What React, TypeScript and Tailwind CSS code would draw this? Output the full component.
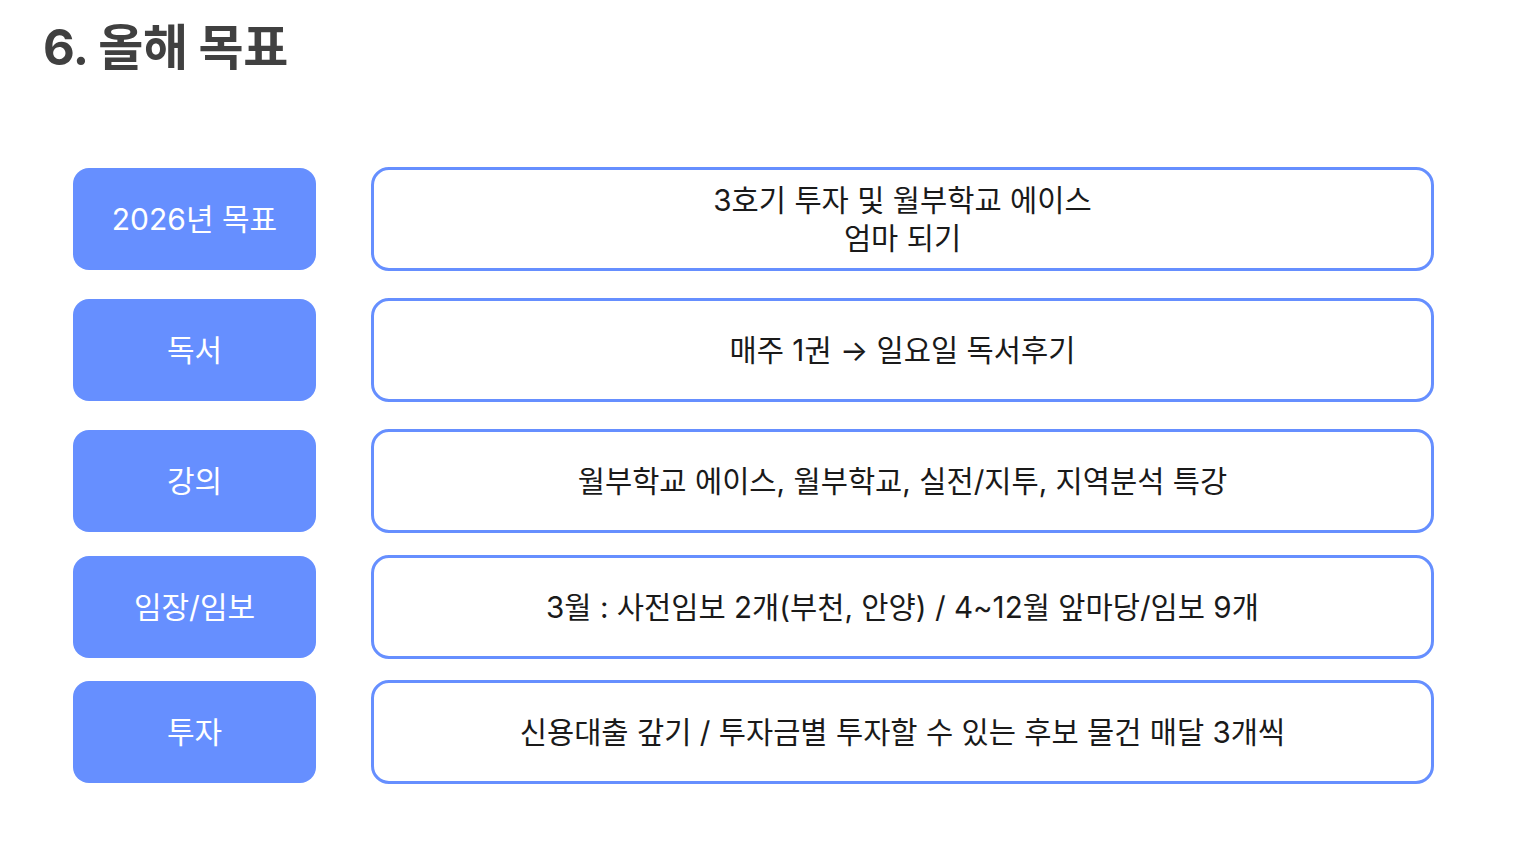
import React from "react";

const rows: { label: string; lines: string[]; mt: string }[] = [
  { label: "2026년 목표", lines: ["3호기 투자 및 월부학교 에이스", "엄마 되기"], mt: "mt-0" },
  { label: "독서", lines: ["매주 1권 → 일요일 독서후기"], mt: "mt-[29px]" },
  { label: "강의", lines: ["월부학교 에이스, 월부학교, 실전/지투, 지역분석 특강"], mt: "mt-[29px]" },
  { label: "임장/임보", lines: ["3월 : 사전임보 2개(부천, 안양) / 4~12월 앞마당/임보 9개"], mt: "mt-[24px]" },
  { label: "투자", lines: ["신용대출 갚기 / 투자금별 투자할 수 있는 후보 물건 매달 3개씩"], mt: "mt-[23px]" },
];

export default function App() {
  return (
    <div
      className="w-[1520px] h-[855px] bg-white overflow-hidden relative"
      style={{ fontFamily: 'Inter, "Noto Sans CJK KR", sans-serif' }}
    >
      <h1 className="absolute left-[43px] top-[16px] text-[49px] font-bold text-[#404040] leading-[64px] tracking-[-0.5px]">
        6. 올해 목표
      </h1>
      <div className="pt-[168px] pl-[73px] flex flex-col">
        {rows.map((r, i) => (
          <div key={i} className={`flex items-center h-[102px] ${r.mt}`}>
            <div className="w-[243px] h-[102px] shrink-0 rounded-[16px] bg-[#668fff] flex items-center justify-center text-white text-[30px]">
              {r.label}
            </div>
            <div className="ml-[55px] w-[1063px] h-[104px] shrink-0 rounded-[18px] border-[3px] border-[#668fff] flex flex-col items-center justify-center text-[29.6px] text-[#1a1a1a] leading-[38px]">
              {r.lines.map((l, j) => (
                <div key={j}>{l}</div>
              ))}
            </div>
          </div>
        ))}
      </div>
    </div>
  );
}
